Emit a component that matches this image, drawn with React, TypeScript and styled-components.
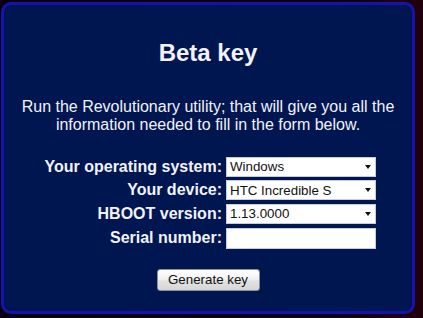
import React from "react";
import styled, { createGlobalStyle } from "styled-components";

const Global = createGlobalStyle`
  html, body {
    margin: 0;
    padding: 0;
    background: #0e000c;
    font-family: "Liberation Sans", Arial, sans-serif;
  }
`;

const Page = styled.div`
  width: 423px;
  height: 318px;
  padding: 2px 0 0 1px;
  box-sizing: border-box;
  background: linear-gradient(90deg, #0a0012 0%, #0e0010 80%, #22000c 100%);
`;

const Panel = styled.div`
  width: 414px;
  height: 312px;
  box-sizing: border-box;
  border: 3px solid #1414a8;
  border-radius: 10px;
  background: #001650;
  box-shadow: inset 0 0 3px #0a0a80;
  color: #f2f2f8;
  display: flex;
  flex-direction: column;
  align-items: center;
`;

const Title = styled.h2`
  margin: 34px 0 0;
  font-size: 24px;
  font-weight: bold;
  line-height: 27.6px;
`;

const Intro = styled.p`
  margin: 31px 0 0;
  font-size: 16px;
  line-height: 18.5px;
  text-align: center;
`;

const Form = styled.div`
  align-self: stretch;
  margin-top: 22px;
  padding-right: 36px;
  display: grid;
  grid-template-columns: 1fr 150px;
  grid-auto-rows: 20px;
  column-gap: 4px;
  row-gap: 3.7px;
`;

const Label = styled.label`
  font-size: 16px;
  font-weight: bold;
  text-align: right;
  align-self: center;
  white-space: nowrap;
`;

const SelectWrap = styled.div`
  position: relative;
  height: 20px;
`;

const Select = styled.select`
  display: block;
  appearance: none;
  -webkit-appearance: none;
  width: 100%;
  height: 20px;
  box-sizing: border-box;
  margin: 0;
  padding: 0 0 0 3px;
  border: 1px solid #c8ccd8;
  background: #ffffff;
  color: #111;
  font-family: "Liberation Sans", Arial, sans-serif;
  font-size: 13.33px;
  border-radius: 0;
  outline: none;
`;

const Arrow = styled.span`
  position: absolute;
  right: 5px;
  top: 8px;
  width: 0;
  height: 0;
  border-left: 3.5px solid transparent;
  border-right: 3.5px solid transparent;
  border-top: 4px solid #111;
  pointer-events: none;
`;

const Input = styled.input`
  display: block;
  width: 100%;
  height: 21px;
  box-sizing: border-box;
  margin: 0;
  border: 1px solid #c8ccd8;
  background: #fff;
  font-family: "Liberation Sans", Arial, sans-serif;
  font-size: 13.33px;
  outline: none;
`;

const Button = styled.button`
  margin-top: 21px;
  width: 103px;
  height: 22px;
  padding: 0;
  border: 1px solid #8a8f9a;
  border-radius: 3px;
  background: linear-gradient(#ffffff 0%, #f2f2f2 45%, #e2e2e2 55%, #d6d6d6 100%);
  color: #111;
  font-family: "Liberation Sans", Arial, sans-serif;
  font-size: 13.33px;
  cursor: pointer;
`;

const Dropdown = ({ value }: { value: string }) => (
  <SelectWrap>
    <Select defaultValue={value}>
      <option>{value}</option>
    </Select>
    <Arrow />
  </SelectWrap>
);

export default function App() {
  return (
    <>
      <Global />
      <Page>
        <Panel>
          <Title>Beta key</Title>
          <Intro>
            Run the Revolutionary utility; that will give you all the
            <br />
            information needed to fill in the form below.
          </Intro>
          <Form>
            <Label>Your operating system:</Label>
            <Dropdown value="Windows" />
            <Label>Your device:</Label>
            <Dropdown value="HTC Incredible S" />
            <Label>HBOOT version:</Label>
            <Dropdown value="1.13.0000" />
            <Label>Serial number:</Label>
            <Input type="text" />
          </Form>
          <Button>Generate key</Button>
        </Panel>
      </Page>
    </>
  );
}
